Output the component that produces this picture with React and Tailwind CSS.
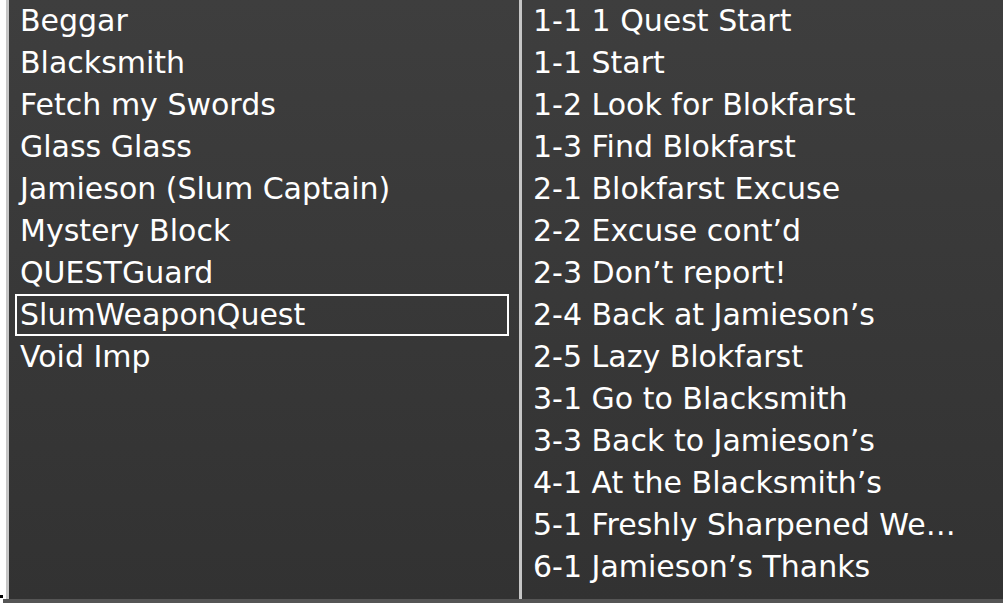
import React from "react";

const left = [
  "Beggar",
  "Blacksmith",
  "Fetch my Swords",
  "Glass Glass",
  "Jamieson (Slum Captain)",
  "Mystery Block",
  "QUESTGuard",
  "SlumWeaponQuest",
  "Void Imp",
];

const right = [
  "1-1 1 Quest Start",
  "1-1 Start",
  "1-2 Look for Blokfarst",
  "1-3 Find Blokfarst",
  "2-1 Blokfarst Excuse",
  "2-2 Excuse cont\u2019d",
  "2-3 Don\u2019t report!",
  "2-4 Back at Jamieson\u2019s",
  "2-5 Lazy Blokfarst",
  "3-1 Go to Blacksmith",
  "3-3 Back to Jamieson\u2019s",
  "4-1 At the Blacksmith\u2019s",
  "5-1 Freshly Sharpened We\u2026",
  "6-1 Jamieson\u2019s Thanks",
];

export default function App() {
  return (
    <div
      className="w-[1003px] h-[603px] flex flex-col overflow-hidden text-white text-[30px] leading-[42px]"
      style={{ fontFamily: '"DejaVu Sans", sans-serif' }}
    >
      <div className="flex h-[599px]">
        <div className="w-[6px] bg-white flex flex-col justify-end">
          <div className="w-[3px] h-[3px] bg-black mb-[1px]" />
        </div>
        <div className="w-[3px] bg-[#c6c6c6]" />
        <div className="flex flex-1 bg-gradient-to-b from-[#3e3e3e] to-[#323232]">
          <div className="w-[510px] flex flex-col">
            {left.map((t) =>
              t === "SlumWeaponQuest" ? (
                <div
                  key={t}
                  className="h-[42px] ml-[6px] mr-[10px] border-2 border-white pl-[3px] leading-[38px] whitespace-nowrap"
                >
                  {t}
                </div>
              ) : (
                <div key={t} className="h-[42px] pl-[11px] whitespace-nowrap">
                  {t}
                </div>
              )
            )}
          </div>
          <div className="w-[3px] bg-[#c6c6c6]" />
          <div className="flex-1 flex flex-col">
            {right.map((t) => (
              <div key={t} className="h-[42px] pl-[11px] whitespace-nowrap">
                {t}
              </div>
            ))}
          </div>
        </div>
      </div>
      <div className="h-[4px] flex">
        <div className="w-[3px] bg-white" />
        <div className="flex-1 bg-[#555555]" />
      </div>
    </div>
  );
}
